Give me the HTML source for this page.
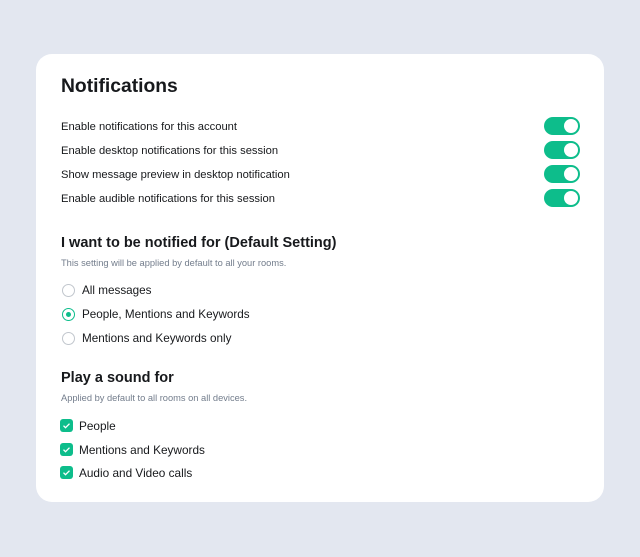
<!DOCTYPE html>
<html><head><style>
body{margin:0;width:640px;height:557px;background:#e3e7f0;font-family:"Liberation Sans",sans-serif;color:#17191c;position:relative;overflow:hidden}
.card{position:absolute;left:36px;top:54px;width:568px;height:448px;background:#fff;border-radius:16px}
.a{position:absolute;white-space:nowrap}
h1{position:absolute;left:25px;top:22px;margin:0;font-size:19.3px;font-weight:bold}
.row{font-size:11.2px;left:25px}
.tg{position:absolute;left:508px;width:36px;height:18px;border-radius:9px;background:#0dbd8b}
.tg:after{content:"";position:absolute;right:2px;top:2px;width:14px;height:14px;border-radius:50%;background:#fff}
h2{position:absolute;margin:0;font-size:14.5px;font-weight:bold;left:25px}
.sub{font-size:9.3px;color:#737d8c;left:25px}
.rl{font-size:11.7px;left:46px}
.rd{position:absolute;left:26px;width:11px;height:11px;border:1px solid #c1c6cd;border-radius:50%}
.rd.on{border-color:#0dbd8b}
.rd.on:after{content:"";position:absolute;left:3px;top:3px;width:5px;height:5px;border-radius:50%;background:#0dbd8b}
.cb{position:absolute;left:24px;width:13px;height:13px;border-radius:3px;background:#0dbd8b}
.cl{font-size:11.8px;left:43px}
</style></head><body><div class="card">
<h1>Notifications</h1>
<div class="a row" style="top:67px">Enable notifications for this account</div>
<div class="a row" style="top:91px">Enable desktop notifications for this session</div>
<div class="a row" style="top:115px">Show message preview in desktop notification</div>
<div class="a row" style="top:139px">Enable audible notifications for this session</div>
<div class="tg" style="top:63px"></div><div class="tg" style="top:87px"></div><div class="tg" style="top:111px"></div><div class="tg" style="top:135px"></div>
<h2 style="top:181px">I want to be notified for (Default Setting)</h2>
<div class="a sub" style="top:204px">This setting will be applied by default to all your rooms.</div>
<div class="rd" style="top:230px"></div><div class="a rl" style="top:230px">All messages</div>
<div class="rd on" style="top:254px"></div><div class="a rl" style="top:254px">People, Mentions and Keywords</div>
<div class="rd" style="top:278px"></div><div class="a rl" style="top:278px">Mentions and Keywords only</div>
<h2 style="top:316px">Play a sound for</h2>
<div class="a sub" style="top:339px">Applied by default to all rooms on all devices.</div>
<div class="cb" style="top:365px"><svg width="13" height="13"><path d="M3.5 6.7l2 2 4-4" stroke="#fff" stroke-width="1.3" fill="none"/></svg></div><div class="a cl" style="top:365px">People</div>
<div class="cb" style="top:389px"><svg width="13" height="13"><path d="M3.5 6.7l2 2 4-4" stroke="#fff" stroke-width="1.3" fill="none"/></svg></div><div class="a cl" style="top:389px">Mentions and Keywords</div>
<div class="cb" style="top:412px"><svg width="13" height="13"><path d="M3.5 6.7l2 2 4-4" stroke="#fff" stroke-width="1.3" fill="none"/></svg></div><div class="a cl" style="top:412px">Audio and Video calls</div>
</div></body></html>
